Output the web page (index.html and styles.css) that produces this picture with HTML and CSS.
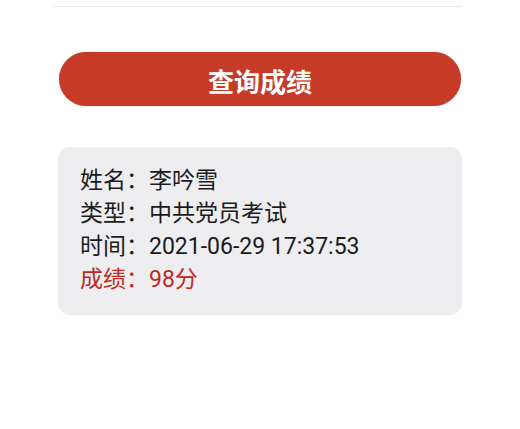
FILE: index.html
```html
<!DOCTYPE html>
<html lang="zh-CN">
<head>
<meta charset="utf-8">
<title>查询成绩</title>
<link rel="stylesheet" href="styles.css">
</head>
<body>
<div class="page">
  <div class="rule"></div>
  <button class="query-btn" type="button">查询成绩</button>
  <div class="result-card">
    <div class="row">姓名：李吟雪</div>
    <div class="row">类型：中共党员考试</div>
    <div class="row">时间：2021-06-29 17:37:53</div>
    <div class="row score">成绩：98分</div>
  </div>
</div>
</body>
</html>
```
FILE: styles.css
```css
html, body {
  margin: 0;
  padding: 0;
  background: #ffffff;
}
body {
  font-family: Roboto, "Noto Sans CJK SC", "Noto Sans", sans-serif;
  color: #1b1b1b;
}
.page {
  display: flex;
  flex-direction: column;
  padding: 6px 58px 0 58px;
}
.rule {
  height: 1px;
  background: #ececee;
  margin-left: -4px;
}
.query-btn {
  margin: 45px 1px 0 1px;
  height: 54px;
  border: none;
  border-radius: 27px;
  background: #c63b27;
  color: #ffffff;
  font-family: "Noto Sans CJK SC", sans-serif;
  font-weight: 700;
  font-size: 26px;
  line-height: 54px;
  padding: 2px 0 0 0;
  box-shadow: 0 0 1px rgba(120, 30, 20, 0.5);
}
.result-card {
  margin-top: 41px;
  height: 168px;
  box-sizing: border-box;
  background: #eeeef1;
  border-radius: 12px;
  padding: 17px 22px 18px 22px;
  display: flex;
  flex-direction: column;
}
.row {
  font-size: 23px;
  line-height: 33px;
  white-space: nowrap;
}
.score {
  color: #c0281e;
}
```
